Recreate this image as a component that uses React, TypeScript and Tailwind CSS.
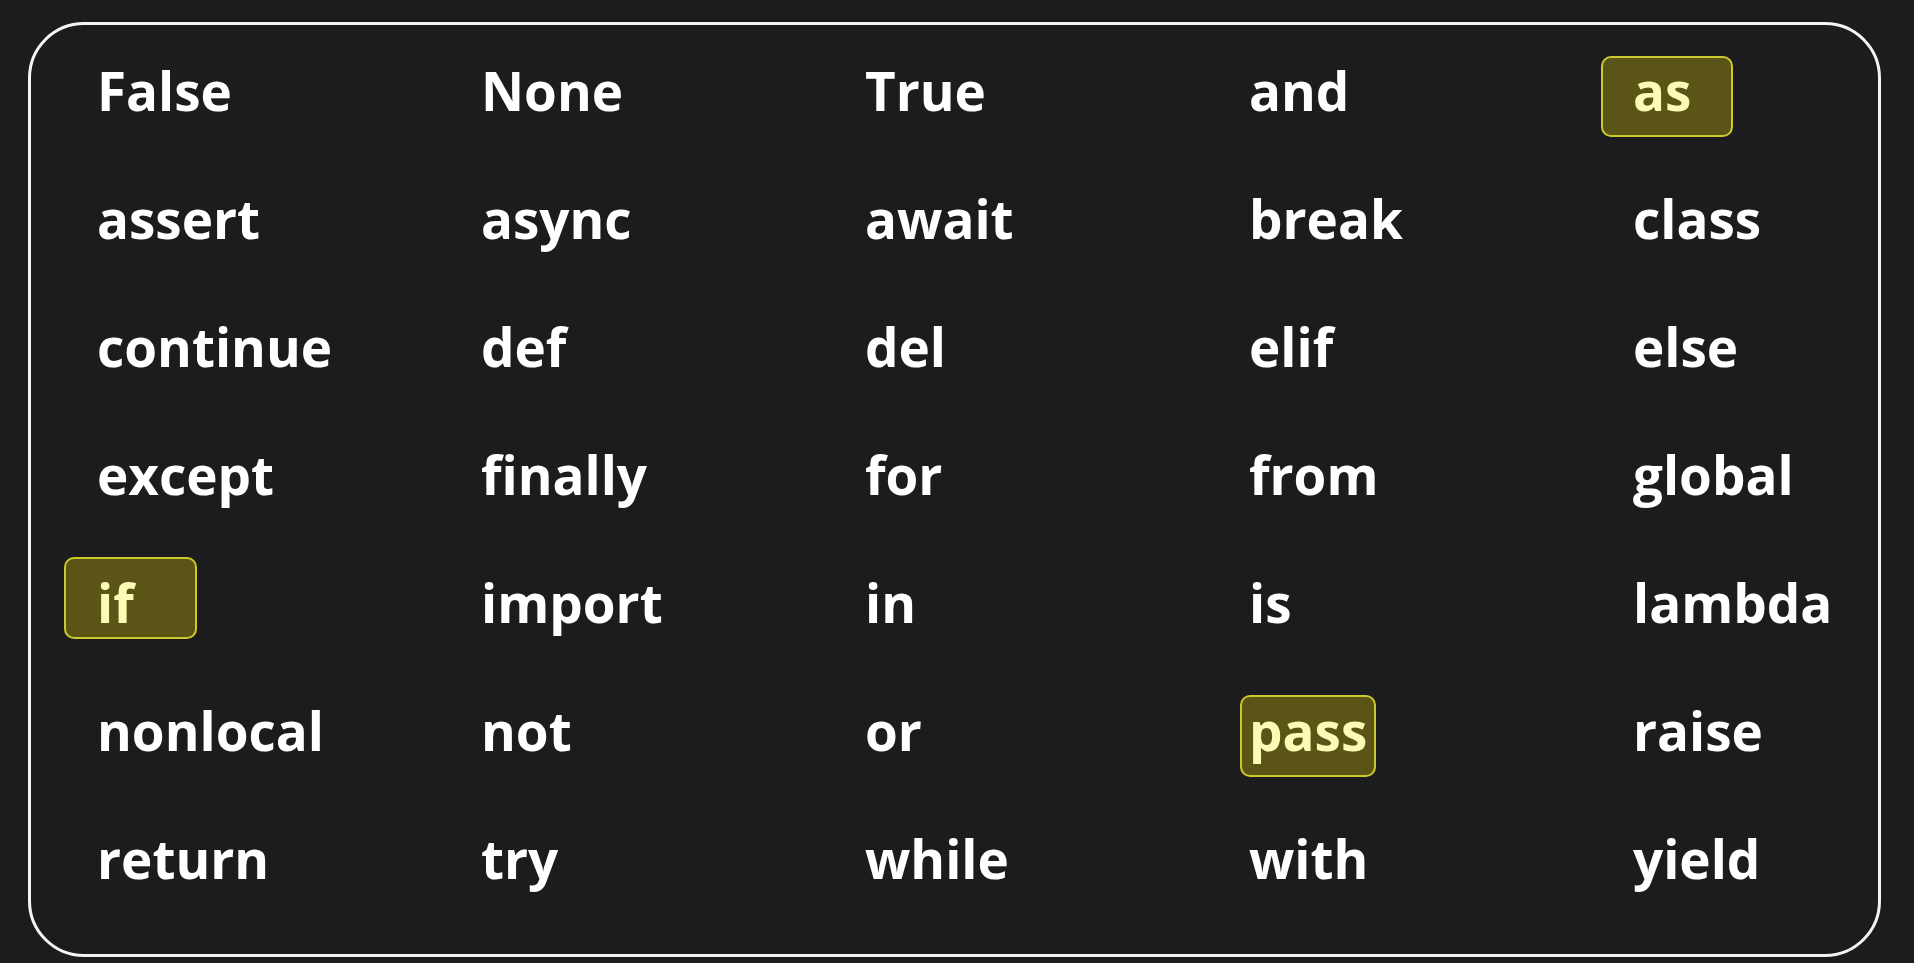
import React from "react";

const rows: string[][] = [
  ["False", "None", "True", "and", "as"],
  ["assert", "async", "await", "break", "class"],
  ["continue", "def", "del", "elif", "else"],
  ["except", "finally", "for", "from", "global"],
  ["if", "import", "in", "is", "lambda"],
  ["nonlocal", "not", "or", "pass", "raise"],
  ["return", "try", "while", "with", "yield"],
];

function Cell({ word }: { word: string }) {
  if (word === "as") {
    return (
      <div className="relative h-full flex items-center">
        <div className="absolute left-[-32px] top-[30px] w-[132px] h-[81px] rounded-[10px] border-2 border-[#cbc92c] bg-[#5a5516]" />
        <span className="relative text-[#fcfab4]">{word}</span>
      </div>
    );
  }
  if (word === "if") {
    return (
      <div className="relative h-full flex items-center">
        <div className="absolute left-[-33px] top-[19px] w-[133px] h-[82px] rounded-[10px] border-2 border-[#cbc92c] bg-[#5a5516]" />
        <span className="relative text-[#fcfab4]">{word}</span>
      </div>
    );
  }
  if (word === "pass") {
    return (
      <div className="relative h-full flex items-center">
        <div className="absolute left-[-9px] top-[29px] w-[136px] h-[82px] rounded-[10px] border-2 border-[#cbc92c] bg-[#5a5516]" />
        <span className="relative text-[#fcfab4]">{word}</span>
      </div>
    );
  }
  return (
    <div className="h-full flex items-center">
      <span>{word}</span>
    </div>
  );
}

export default function App() {
  return (
    <div className="w-[1914px] h-[963px] bg-[#1c1c1e] overflow-hidden pt-[22px] pl-[28px]">
      <div
        className="w-[1853px] h-[935px] rounded-[56px] border-[3px] border-[#f4f4f4] pt-[1px] pl-[66px] text-white font-bold text-[53px] leading-none"
        style={{ fontFamily: '"Open Sans", "Noto Sans", sans-serif' }}
      >
        <div className="grid grid-cols-[repeat(5,384px)] grid-rows-[repeat(7,128px)]">
          {rows.flat().map((w, i) => (
            <Cell key={i} word={w} />
          ))}
        </div>
      </div>
    </div>
  );
}
